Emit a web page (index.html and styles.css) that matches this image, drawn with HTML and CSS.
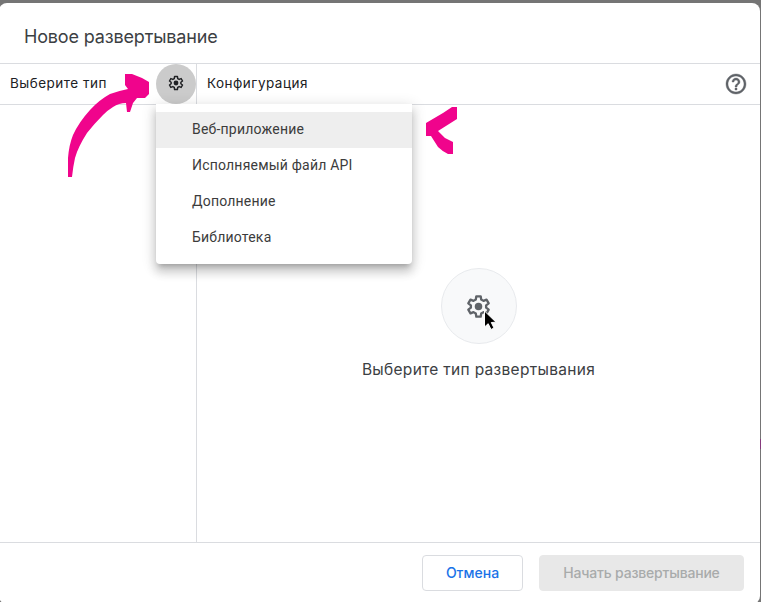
FILE: index.html
```
<!DOCTYPE html>
<html lang="ru">
<head>
<meta charset="utf-8">
<title>Новое развертывание</title>
<link rel="stylesheet" href="styles.css">
</head>
<body>
<svg class="defs" aria-hidden="true">
  <symbol id="gear" viewBox="0 0 24 24">
    <path class="gear-rim" d="M9.900 2.200H14.100L14.600 5.300L16.800 6.600L19.700 5.400L21.800 9L19.300 10.900V13.100L21.800 15L19.700 18.600L16.800 17.400L14.600 18.700L14.100 21.800H9.900L9.400 18.700L7.200 17.400L4.300 18.600L2.200 15L4.700 13.100V10.900L2.200 9L4.300 5.400L7.200 6.600L9.400 5.300Z"/>
    <circle cx="12" cy="12" r="3.600" fill="currentColor"/>
  </symbol>
</svg>
<main class="dialog">
  <header class="title"><h1>Новое развертывание</h1></header>
  <div class="content">
    <section class="side">
      <div class="bar side-bar">
        <span class="type-label">Выберите тип</span>
        <button class="gear-button" aria-label="Тип"><svg class="gear-small"><use href="#gear"/></svg></button>
      </div>
    </section>
    <section class="config">
      <div class="bar config-bar">
        <span class="config-label">Конфигурация</span>
        <svg class="help" viewBox="0 0 24 24"><path fill="currentColor" d="M11 18h2v-2h-2v2zm1-16C6.480 2 2 6.480 2 12s4.480 10 10 10 10-4.480 10-10S17.520 2 12 2zm0 18c-4.410 0-8-3.590-8-8s3.590-8 8-8 8 3.590 8 8-3.590 8-8 8zm0-14c-2.210 0-4 1.790-4 4h2c0-1.100.9-2 2-2s2 .9 2 2c0 2-3 1.750-3 5h2c0-2.250 3-2.500 3-5 0-2.210-1.790-4-4-4z"/></svg>
      </div>
      <div class="empty">
        <div class="disc"><svg class="gear-large"><use href="#gear"/></svg></div>
        <p class="hint">Выберите тип развертывания</p>
      </div>
    </section>
  </div>
  <footer class="actions">
    <button class="btn cancel"><span>Отмена</span></button>
    <button class="btn deploy" disabled><span>Начать развертывание</span></button>
  </footer>
</main>
<ul class="menu">
  <li class="active">Веб-приложение</li>
  <li>Исполняемый файл API</li>
  <li>Дополнение</li>
  <li>Библиотека</li>
</ul>
<svg class="marks" viewBox="0 0 761 602" aria-hidden="true">
  <path fill="#f0048c" d="M68 177V158Q69 145 73 135Q79 122 90 110Q99 100 110 94Q118 91 128 89L125 85V74H132L142 78L149 82V94L145 98H137L133 103L130 112H127L126 103Q119 103 113 107Q108 110 103 115Q94 124 87 133Q78 147 75 158Q73 167 72 177Z"/>
  <path fill="#f0048c" d="M426 123L443 113L452 107H457V119L438 131L445 138L453 142V154H448Q442 151 438 147L431 136H426Z"/>
  <path fill="#000" stroke="#fff" stroke-width="1" d="M484.500 311L484.500 327L488.200 323.700L491 329.500L494 328L491.300 322.500L496 322.200Z"/>
  <path fill="#863a7d" d="M760 439h1v10h-1z"/>
</svg>
</body>
</html>
```
FILE: styles.css
```
* { box-sizing: border-box; }
body {
  margin: 0;
  height: 602px;
  overflow: hidden;
  background: #757575;
  padding-top: 3px;
  font-family: Inter, "Noto Sans", sans-serif;
  color: #3c4043;
}
.defs { position: absolute; width: 0; height: 0; }
.dialog {
  display: flex;
  flex-direction: column;
  width: 761px;
  height: 601px;
  margin-left: -1px;
  padding-left: 1px;
  border-radius: 8px;
  background: #fff;
  overflow: hidden;
}
.title {
  height: 61px;
  padding: 21px 24px 0;
  border-bottom: 1px solid #dadce0;
}
h1 { margin: 0; font-size: 18px; line-height: 26px; font-weight: 400; letter-spacing: -.16px; white-space: nowrap; }
.content { display: flex; height: 479px; border-bottom: 1px solid #dadce0; }
.side { width: 197px; border-right: 1px solid #dadce0; }
.config { flex: 1; }
.bar {
  display: flex;
  align-items: center;
  justify-content: space-between;
  height: 41px;
  border-bottom: 1px solid #dadce0;
  font-size: 13.5px;
  letter-spacing: .48px;
  white-space: nowrap;
  color: #202124;
}
.bar > span { line-height: 20px; margin-top: -2px; }
.side-bar { padding-left: 10px; }
.config-bar { padding: 0 12px 0 10px; }
.gear-button {
  display: flex;
  align-items: center;
  justify-content: center;
  width: 40px;
  height: 40px;
  padding: 0;
  border: 0;
  border-radius: 50%;
  background: #cbcbcb;
  color: #202124;
}
.gear-rim { fill: none; stroke: currentColor; stroke-width: 2.2; stroke-linejoin: round; }
.gear-small, .gear-large { overflow: visible; }
.gear-small { width: 16px; height: 16px; margin-top: -2px; }
.gear-large { width: 25px; height: 25px; color: #5f6368; }
.help { width: 24px; height: 24px; color: #5f6368; stroke: currentColor; stroke-width: .4px; }
.empty { display: flex; flex-direction: column; align-items: center; padding-top: 163px; }
.disc {
  display: flex;
  align-items: center;
  justify-content: center;
  width: 76px;
  height: 76px;
  border: 1px solid #e8eaed;
  border-radius: 50%;
  background: #f8f9fa;
}
.hint { margin: 14px 0 0; font-size: 15.5px; line-height: 24px; letter-spacing: .3px; white-space: nowrap; }
.actions {
  display: flex;
  justify-content: flex-end;
  gap: 16px;
  padding: 12px 16px;
}
.btn {
  height: 36px;
  padding: 0 0 1px;
  border: 1px solid #dadce0;
  border-radius: 4px;
  background: #fff;
  font: 500 14px/20px Inter, sans-serif;
  white-space: nowrap;
}
.cancel { width: 101px; color: #1a73e8; }
.deploy { width: 205px; border-color: #e8e8e8; background: #e8e8e8; color: #a8abab; letter-spacing: -.2px; }
.menu {
  position: absolute;
  left: 156px;
  top: 104px;
  width: 256px;
  height: 160px;
  margin: 0;
  padding: 8px 0;
  list-style: none;
  background: #fff;
  border-radius: 0 0 4px 4px;
  box-shadow: 0 5px 5px -3px rgba(0,0,0,.2), 0 8px 10px 1px rgba(0,0,0,.14), 0 3px 14px 2px rgba(0,0,0,.12);
  font: 14px/36px Roboto, sans-serif;
  color: #3c3c3c;
}
.menu li { height: 36px; padding-left: 36px; white-space: nowrap; line-height: 35px; letter-spacing: .2px; }
.menu .active { background: #eee; }
.marks { position: absolute; left: 0; top: 0; width: 761px; height: 602px; pointer-events: none; }
```
